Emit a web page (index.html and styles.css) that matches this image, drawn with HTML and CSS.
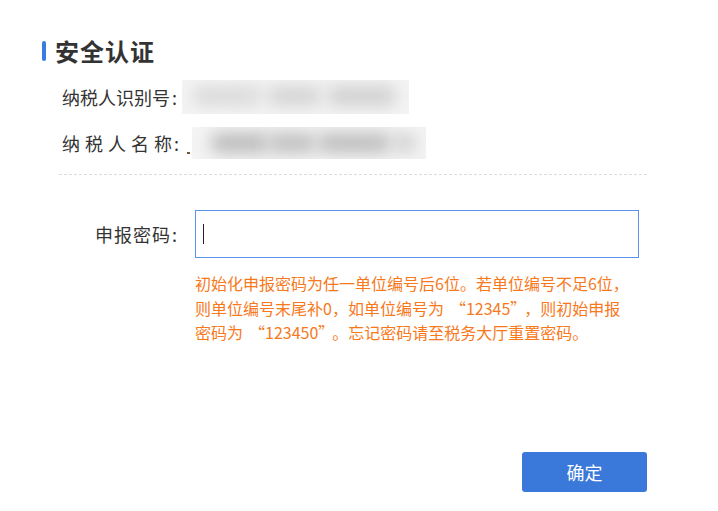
FILE: index.html
```html
<!DOCTYPE html>
<html lang="zh-CN">
<head>
<meta charset="utf-8">
<title>安全认证</title>
<link rel="stylesheet" href="styles.css">
</head>
<body>
<div class="page">
  <div class="title"><span class="title-bar"></span><span class="title-text">安全认证</span></div>
  <div class="info">
    <div class="info-row">
      <span class="info-label">纳税人识别号</span><span class="colon">:</span>
      <div class="blur blur-1"><span class="blob b1"></span><span class="blob b2"></span><span class="blob b3"></span></div>
    </div>
    <div class="info-row">
      <span class="info-label justify">纳税人名称</span><span class="colon">:</span>
      <span class="dot"></span>
      <div class="blur blur-2"><span class="blob b1"></span><span class="blob b2"></span><span class="blob b3"></span><span class="blob b4"></span></div>
    </div>
  </div>
  <div class="divider"></div>
  <div class="pwd-row">
    <label class="pwd-label">申报密码<span class="pwd-colon">:</span></label>
    <div class="pwd-input"><span class="caret"></span></div>
  </div>
  <p class="hint">初始化申报密码为任一单位编号后6位。若单位编号不足6位，<br>则单位编号末尾补0，如单位编号为<span class="ql">“</span>12345<span class="qr">”</span>，则初始申报<br>密码为<span class="ql">“</span>123450<span class="qr">”</span>。忘记密码请至税务大厅重置密码。</p>
  <div class="actions"><button class="btn">确定</button></div>
</div>
</body>
</html>
```
FILE: styles.css
```css
html, body {
  margin: 0;
  padding: 0;
  background: #fff;
}
body {
  font-family: "Noto Sans CJK SC", "Microsoft YaHei", sans-serif;
  color: #333;
}
.page {
  width: 605px;
  padding: 39px 0 0 42px;
}
.title {
  display: flex;
  align-items: center;
  height: 24px;
}
.title-bar {
  width: 4px;
  height: 20px;
  border-radius: 2px;
  background: #3b7ce3;
  margin-right: 9px;
}
.title-text {
  font-size: 24px;
  line-height: 24px;
  font-weight: bold;
  letter-spacing: 1px;
  color: #333;
}
.info {
  margin-top: 17px;
  padding-left: 20px;
  display: flex;
  flex-direction: column;
  gap: 12px;
}
.info-row {
  display: flex;
  align-items: center;
  height: 34px;
  font-size: 18px;
  line-height: 34px;
  color: #333;
}
.info-label {
  display: inline-block;
}
.info-label.justify {
  width: 110px;
  text-align: justify;
  text-align-last: justify;
}
.colon {
  margin-left: 2px;
}
.blur {
  position: relative;
  overflow: hidden;
  background: #f4f4f4;
}
.blur-1 {
  margin-left: 5px;
  width: 227px;
  height: 34px;
}
.blur-2 {
  margin-left: 2px;
  width: 234px;
  height: 32px;
}
.dot {
  width: 3px;
  height: 2px;
  margin-left: 8px;
  margin-top: 20px;
  background: #6b5a3a;
}
.blob {
  position: absolute;
  top: 6px;
  height: 20px;
  border-radius: 10px;
  background: #d0d0d0;
  filter: blur(8px);
}
.blur-1 .b1 { left: 10px; width: 70px; background: #dadada; }
.blur-1 .b2 { left: 85px; width: 55px; background: #d4d4d4; }
.blur-1 .b3 { left: 145px; width: 70px; background: #d0d0d0; }
.blur-2 .b1 { left: 18px; width: 60px; background: #bcbcbc; }
.blur-2 .b2 { left: 75px; width: 50px; background: #c0c0c0; }
.blur-2 .b3 { left: 125px; width: 75px; background: #bebebe; }
.blur-2 .b4 { left: 200px; width: 25px; background: #d2d2d2; }
.divider {
  margin: 14px 0 0 17px;
  border-top: 1px dashed #dcdcdc;
}
.pwd-row {
  margin-top: 35px;
  display: flex;
  align-items: center;
}
.pwd-label {
  width: 136px;
  text-align: right;
  font-size: 18px;
  letter-spacing: 1px;
  color: #333;
  padding-right: 17px;
  box-sizing: content-box;
}
.pwd-colon {
  margin-left: 1px;
}
.pwd-input {
  width: 435px;
  height: 46px;
  border: 1px solid #5b93ea;
  display: flex;
  align-items: center;
  padding-left: 7px;
  box-sizing: content-box;
}
.caret {
  width: 1px;
  height: 20px;
  background: #222;
}
.hint {
  margin: 13px 0 0 153px;
  font-size: 16px;
  line-height: 24.5px;
  color: #f7791c;
  white-space: nowrap;
}
.ql {
  margin-left: 6px;
}
.qr {
  margin-right: 6px;
}
.actions {
  margin-top: 107px;
  display: flex;
  justify-content: flex-end;
}
.btn {
  width: 125px;
  height: 40px;
  border: none;
  border-radius: 3px;
  background: #3a78d9;
  color: #fff;
  font-family: "Noto Sans CJK SC", "Microsoft YaHei", sans-serif;
  font-size: 18px;
  padding: 0;
}
```
